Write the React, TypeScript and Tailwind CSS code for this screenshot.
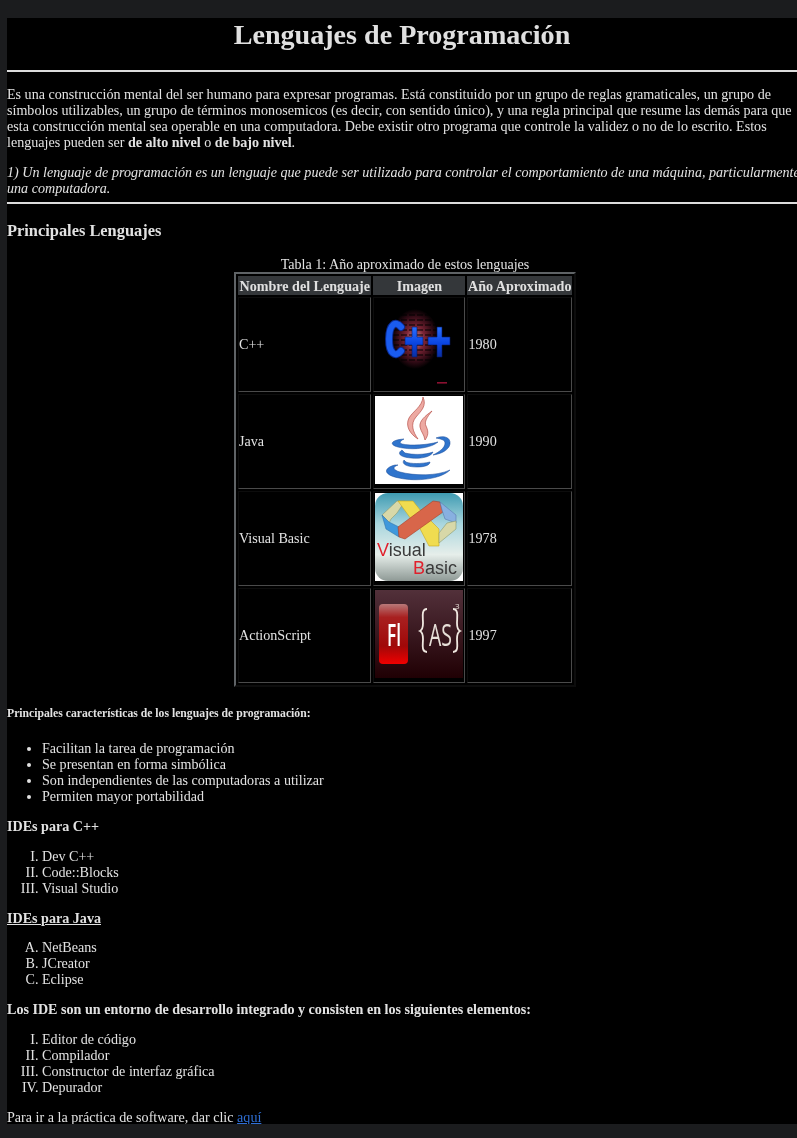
function Cpp() {
  return (
    <svg width="88" height="88" viewBox="0 0 88 88" className="block">
      <defs>
        <radialGradient id="ball" cx="50%" cy="50%" r="50%">
          <stop offset="0%" stopColor="#d89098" />
          <stop offset="40%" stopColor="#7a2434" />
          <stop offset="78%" stopColor="#2e0a14" />
          <stop offset="100%" stopColor="#000" />
        </radialGradient>
        <linearGradient id="cppblue" x1="0" y1="0" x2="0" y2="1">
          <stop offset="0%" stopColor="#2a70ff" />
          <stop offset="55%" stopColor="#0a44e0" />
          <stop offset="100%" stopColor="#0a2ea0" />
        </linearGradient>
      </defs>
      <rect width="88" height="88" fill="#000" />
      <ellipse cx="40" cy="40" rx="24" ry="30" fill="url(#ball)" />
      {[16, 21, 26, 31, 36, 41, 46, 51, 56, 61].map((y) => (
        <line key={y} x1="18" x2="62" y1={y} y2={y} stroke="#000" strokeWidth="1" strokeDasharray="6 2" />
      ))}
      <path d="M26 28 C23 24.5 20 24 18 26 C13 30 12.5 50 18 54 C20 56 23 55.5 26 52" fill="none" stroke="#0a2a90" strokeWidth="8" strokeLinecap="round" />
      <path d="M26 28 C23 24.5 20 24 18 26 C13 30 12.5 50 18 54 C20 56 23 55.5 26 52" fill="none" stroke="#1a5cf0" strokeWidth="6" strokeLinecap="round" />
      <path d="M37 28h5v10h6v8h-6v12h-5V46h-7v-8h7z" fill="url(#cppblue)" stroke="#061a60" strokeWidth="0.6" />
      <path d="M62 28h5v10h8v8h-8v12h-5V46h-9v-8h9z" fill="url(#cppblue)" stroke="#061a60" strokeWidth="0.6" />
      <rect x="62" y="83" width="10" height="1.6" fill="#8a1030" />
    </svg>
  );
}
function Java() {
  return (
    <svg width="88" height="88" viewBox="0 0 88 88" className="block">
      <rect width="88" height="88" fill="#fff" />
      <g fill="#eda9a2" stroke="#b8524a" strokeWidth="0.7">
        <path d="M48 1 C52 10 46 15 41 21 C35 28 38 36 43 43 C35 38 30 30 34 22 C38 15 47 11 48 1 Z" />
        <path d="M57 15 C50 20 44 25 45 31 C46 36 49 38 50 44 C53 40 54 36 51 30 C49 26 52 21 57 15 Z" />
      </g>
      <g fill="#2f74cc" stroke="#1a4a96" strokeWidth="0.5">
        <path d="M29 43 C14 44 13 50 28 52 C40 54 56 52 63 46 C52 49 36 50 27 48 C24 47 25 45 29 43 Z" />
        <path d="M27 54 C22 57 24 61 36 62 C46 63 56 61 58 56 C50 59 38 59 30 57 Z" />
        <path d="M29 64 C26 68 32 71 42 71 C50 71 55 69 55 66 C46 68 36 68 31 66 Z" />
        <path d="M61 42 C68 39 76 41 75 48 C74 54 66 58 58 59 C64 56 70 52 70 47 C70 44 66 43 61 42 Z" />
        <path d="M20 69 C8 72 8 79 24 82 C42 86 66 83 75 74 C62 80 40 80 25 76 C18 74 17 71 23 69 Z" />
      </g>
    </svg>
  );
}
function VB() {
  return (
    <svg width="88" height="88" viewBox="0 0 88 88" className="block">
      <defs>
        <linearGradient id="vbbg" x1="0" y1="0" x2="0" y2="1">
          <stop offset="0%" stopColor="#3f9bb2" />
          <stop offset="35%" stopColor="#a9d6de" />
          <stop offset="70%" stopColor="#e6eeea" />
          <stop offset="100%" stopColor="#8f9a96" />
        </linearGradient>
      </defs>
      <rect width="88" height="88" fill="#fff" />
      <rect width="88" height="88" rx="13" fill="url(#vbbg)" />
      <path d="M7 22 L22 8 L30 8 L22 20 L16 26 L14 30 Z" fill="#d8d8a8" stroke="#8a9a70" strokeWidth="0.6" />
      <path d="M7 22 L14 29 L24 34 L24 44 L11 36 Z" fill="#3f98dc" stroke="#2a6aa0" strokeWidth="0.5" />
      <path d="M23 8 L38 8 L46 18 L36 26 Z" fill="#f0dc50" stroke="#c8a820" strokeWidth="0.6" />
      <path d="M41 28 L50 22 L64 36 L64 53 L54 53 Z" fill="#f0dc50" stroke="#c8a820" strokeWidth="0.6" />
      <path d="M23 34 L58 8 L65 9 L68 19 L30 46 L24 44 Z" fill="#d8664a" stroke="#a84028" strokeWidth="0.6" />
      <path d="M65 9 L81 22 L81 30 L70 26 L67 17 Z" fill="#88b0e0" stroke="#5a7ab0" strokeWidth="0.6" />
      <path d="M81 28 L81 36 L64 50 L64 40 L72 30 Z" fill="#d8d8a8" stroke="#8a9a70" strokeWidth="0.6" />
      <text x="2" y="63" fontFamily="'Liberation Sans', sans-serif" fontSize="18" fill="#3a3a3a"><tspan fill="#e0202c">V</tspan>isual</text>
      <text x="38" y="81" fontFamily="'Liberation Sans', sans-serif" fontSize="18" fill="#3a3a3a"><tspan fill="#e0202c">B</tspan>asic</text>
    </svg>
  );
}
function AS() {
  return (
    <svg width="88" height="88" viewBox="0 0 88 88" className="block">
      <defs>
        <linearGradient id="asbg" x1="0" y1="0" x2="0" y2="1">
          <stop offset="0%" stopColor="#52303a" />
          <stop offset="100%" stopColor="#200004" />
        </linearGradient>
        <linearGradient id="flbg" x1="0" y1="0" x2="0" y2="1">
          <stop offset="0%" stopColor="#b87878" />
          <stop offset="22%" stopColor="#a82020" />
          <stop offset="70%" stopColor="#a00808" />
          <stop offset="100%" stopColor="#f00000" />
        </linearGradient>
      </defs>
      <rect width="88" height="88" fill="url(#asbg)" />
      <rect x="4" y="14" width="29" height="60" rx="4" fill="url(#flbg)" />
      <text x="12" y="56" fontFamily="'Open Sans', sans-serif" fontSize="31" fontWeight="600" fill="#fff" textLength="14" lengthAdjust="spacingAndGlyphs">Fl</text>
      <text x="54" y="56" fontFamily="'Open Sans', sans-serif" fontSize="31" fill="#e8e0d8" textLength="23" lengthAdjust="spacingAndGlyphs">AS</text>
      <path d="M52 19 C46 19 48 28 48 33 C48 38 47 40 45 41 C47 42 48 44 48 49 C48 54 46 62 52 62" fill="none" stroke="#f0e8e0" strokeWidth="1.8" />
      <path d="M78 19 C84 19 82 28 82 33 C82 38 83 40 85 41 C83 42 82 44 82 49 C82 54 84 62 78 62" fill="none" stroke="#f0e8e0" strokeWidth="1.8" />
      <text x="80" y="19" fontFamily="'Open Sans', sans-serif" fontSize="8" fill="#e8e0d8">3</text>
    </svg>
  );
}

const rows = [
  { n: "C++", Img: Cpp, y: "1980" },
  { n: "Java", Img: Java, y: "1990" },
  { n: "Visual Basic", Img: VB, y: "1978" },
  { n: "ActionScript", Img: AS, y: "1997" },
];
const td = "border border-t-[#0c0c0c] border-l-[#0c0c0c] border-r-[#4a4a4a] border-b-[#4a4a4a]";
const th = "bg-[#34373a] py-px font-bold text-center leading-[16px] whitespace-nowrap text-[#e0e0e0]";

export default function App() {
  return (
    <div className="h-[1138px] w-[797px] overflow-hidden bg-[#1b1c1e] pt-[18px] pl-[7px] font-['Liberation_Serif',serif] text-[14.1px] leading-[16px] text-[#e2e2e2]">
      <div className="h-[1106px] w-[790px] overflow-hidden bg-black blur-[0.4px]">
        <h1 className="pt-[1px] text-center text-[28.1px] leading-[32px] font-bold text-[#e0e0e0]">Lenguajes de Programación</h1>
        <hr className="mt-[19px] border-0 h-[2px] bg-[#dcdcdc]" />
        <p className="mt-[14px] whitespace-nowrap">
          Es una construcción mental del ser humano para expresar programas. Está constituido por un grupo de reglas gramaticales, un grupo de<br />
          símbolos utilizables, un grupo de términos monosemicos (es decir, con sentido único), y una regla principal que resume las demás para que<br />
          esta construcción mental sea operable en una computadora. Debe existir otro programa que controle la validez o no de lo escrito. Estos<br />
          lenguajes pueden ser <b>de alto nivel</b> o <b>de bajo nivel</b>.
        </p>
        <p className="mt-[14px] whitespace-nowrap italic">
          1) Un lenguaje de programación es un lenguaje que puede ser utilizado para controlar el comportamiento de una máquina, particularmente<br />
          una computadora.
        </p>
        <hr className="mt-[6px] border-0 h-[2px] bg-[#dcdcdc]" />
        <h3 className="mt-[18px] text-[16.4px] leading-[18px] font-bold">Principales Lenguajes</h3>
        <div className="mt-[16px] flex justify-center pl-[6px]">
          <table className="border-separate border-spacing-[2px] border-[2px] border-t-[#5f6366] border-l-[#5f6366] border-r-[#0c0c0c] border-b-[#0c0c0c]">
            <caption className="leading-[16px]">Tabla 1: Año aproximado de estos lenguajes</caption>
            <tbody>
              <tr className="h-[19px]">
                <th className={th + " px-[1.5px]"}>Nombre del Lenguaje</th>
                <th className={th + " px-px"}>Imagen</th>
                <th className={th + " px-[0.5px]"}>Año Aproximado</th>
              </tr>
              {rows.map(({ n, Img, y }) => (
                <tr key={n} className="h-[95px]">
                  <td className={td + " pr-px pb-[1px]"}>{n}</td>
                  <td className={td + " p-px align-top"}><Img /></td>
                  <td className={td + " pr-px pb-[1px]"}>{y}</td>
                </tr>
              ))}
            </tbody>
          </table>
        </div>
        <p className="mt-[21px] text-[11.7px] leading-[12px] font-bold">Principales características de los lenguajes de programación:</p>
        <ul className="mt-[20px] list-disc pl-[35px]">
          <li>Facilitan la tarea de programación</li>
          <li>Se presentan en forma simbólica</li>
          <li>Son independientes de las computadoras a utilizar</li>
          <li>Permiten mayor portabilidad</li>
        </ul>
        <p className="mt-[14px] font-bold">IDEs para C++</p>
        <ol className="mt-[14px] list-[upper-roman] pl-[35px]">
          <li>Dev C++</li>
          <li>Code::Blocks</li>
          <li>Visual Studio</li>
        </ol>
        <p className="mt-[14px] font-bold underline">IDEs para Java</p>
        <ol className="mt-[13px] list-[upper-alpha] pl-[35px]">
          <li>NetBeans</li>
          <li>JCreator</li>
          <li>Eclipse</li>
        </ol>
        <p className="mt-[14px] font-bold">Los IDE son un entorno de desarrollo integrado y consisten en los siguientes elementos:</p>
        <ol className="mt-[14px] list-[upper-roman] pl-[35px]">
          <li>Editor de código</li>
          <li>Compilador</li>
          <li>Constructor de interfaz gráfica</li>
          <li>Depurador</li>
        </ol>
        <p className="mt-[14px]">Para ir a la práctica de software, dar clic <a href="#" className="text-[#2f6fd6] underline">aquí</a></p>
      </div>
    </div>
  );
}
